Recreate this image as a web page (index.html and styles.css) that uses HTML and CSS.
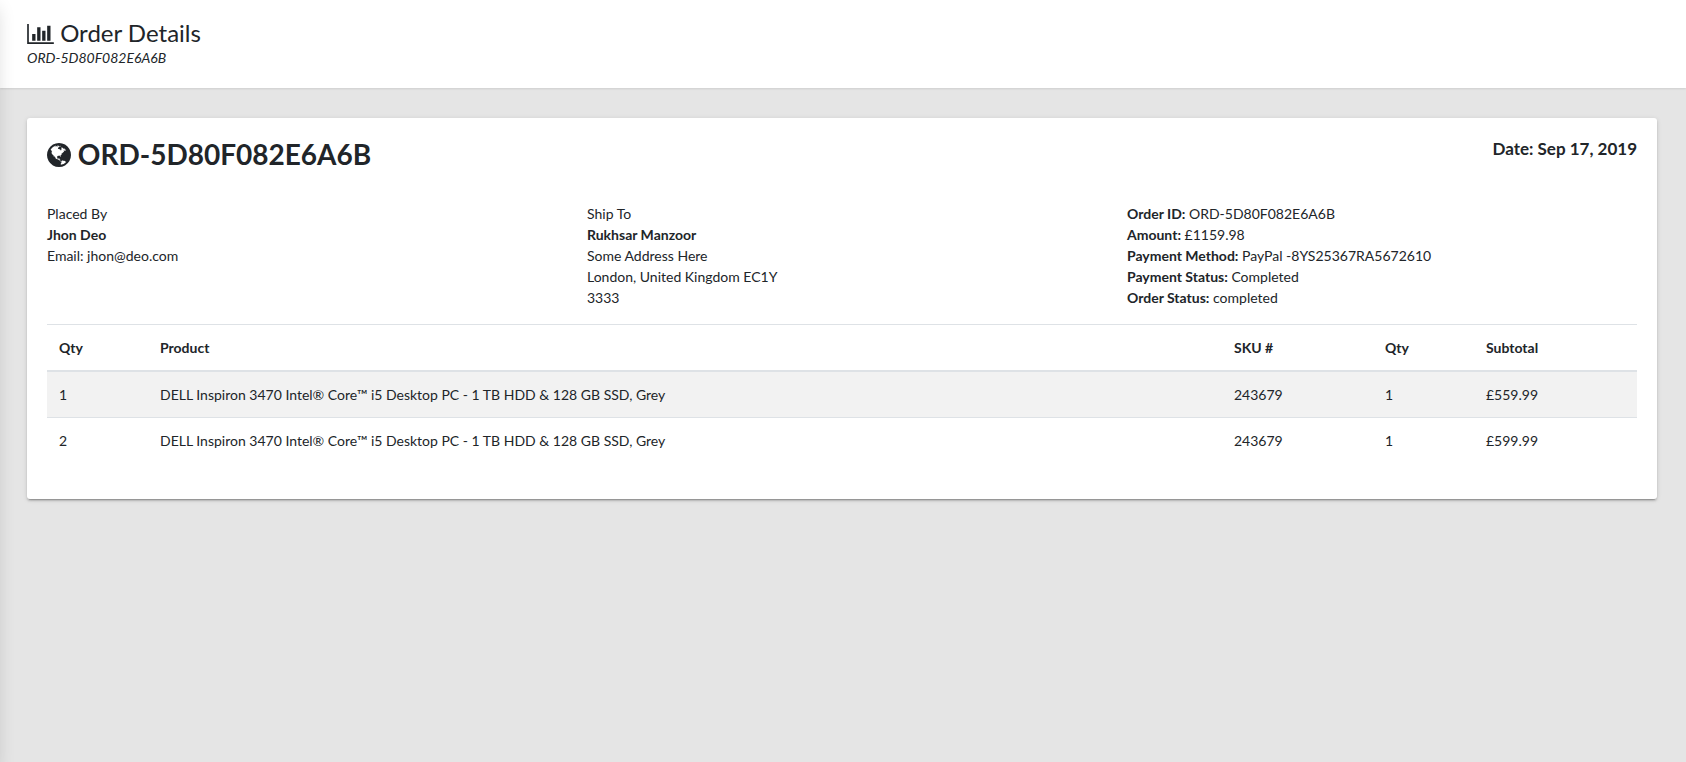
FILE: index.html
```html
<!DOCTYPE html>
<html lang="en">
<head>
    <meta charset="UTF-8">
    <meta name="viewport" content="width=device-width, initial-scale=1.0">
    <title>Order Details</title>
    <link rel="stylesheet" href="styles.css">
</head>
<body>

<main class="app-content">
    <header class="app-title">
        <h1>
            <svg class="icon icon-chart" viewBox="0 0 2048 1536" aria-hidden="true"><path d="M640 768v512h-256v-512h256zm384-512v1024h-256v-1024h256zm1024 1152v128h-2048v-1536h128v1408h1920zm-640-896v768h-256v-768h256zm384-384v1152h-256v-1152h256z"/></svg>
            Order Details
        </h1>
        <p>ORD-5D80F082E6A6B</p>
    </header>

    <section class="tile">
        <div class="page-header">
            <h2>
                <svg class="icon icon-globe" viewBox="0 128 1536 1536" aria-hidden="true"><path d="M768 128q209 0 385.5 103t279.5 279.5 103 385.5-103 385.5-279.5 279.5-385.5 103-385.5-103-279.5-279.5-103-385.5 103-385.5 279.5-279.5 385.5-103zm274 521q-2 1-9.5 9.5t-13.5 9.5q2 0 4.5-5t5-11 3.5-7q6-7 22-15 14-6 52-12 34-8 51 11-2-2 9.5-13t14.5-12q3-2 15-4.5t15-7.5l2-22q-12 1-17.5-7t-6.5-21q0 2-6 8 0-7-4.5-8t-11.5 1-9 1q-10-3-15-7.5t-8-16.5-4-15q-2-5-9.5-11t-9.5-10q-1-2-2.5-5.5t-3-6.5-4-5.5-5.5-2.5-7 5-7.5 10-4.5 5q-3-2-6-1.5t-4.5 1-4.5 3-5 3.5q-3 2-8.5 3t-8.5 2q15-5-1-11-10-4-16-3 9-4 7.5-12t-8.5-14h5q-1-4-8.5-8.5t-17.5-8.5-13-6q-8-5-34-9.5t-33-.5q-5 6-4.5 10.5t4 14 3.5 12.5q1 6-5.5 13t-6.5 12q0 7 14 15.5t10 21.5q-3 8-16 16t-16 12q-5 8-1.5 18.5t10.5 16.5q2 2 1.5 4t-3.5 4.5-5.5 4-6.5 3.5l-3 2q-11 5-20.5-6t-13.5-26q-7-25-16-30-23-8-29 1-5-13-41-26-25-9-58-4 6-1 0-15-7-15-19-12 3-6 4-17.5t1-13.5q3-13 12-23 1-1 7-8.5t9.5-13.5.5-6q35 4 50-11 5-5 11.5-17t10.5-17q9-6 14-5.5t14.5 5.5 14.5 5q14 1 15.5-11t-7.5-20q12 1 3-17-4-7-8-9-12-4-27 5-8 4 2 8-1-1-9.5 10.5t-16.5 17.5-16-5q-1-1-5.5-13.5t-9.5-13.5q-8 0-16 15 3-8-11-15t-24-8q19-12-8-27-7-4-20.5-5t-19.5 4q-5 7-5.5 11.5t5 8 10.5 5.5 11.5 4 8.5 3q14 10 8 14-2 1-8.5 3.5t-11.5 4.5-6 4q-3 4 0 14t-2 14q-5-5-9-17.5t-7-16.5q7 9-25 6l-10-1q-4 0-16 2t-20.5 1-13.5-8q-4-8 0-20 1-4 4-2-4-3-11-9.5t-10-8.5q-46 15-94 41 6 1 12-1 5-2 13-6.5t10-5.5q34-14 42-7l5-5q14 16 20 25-7-4-30-1-20 6-22 12 7 12 5 18-4-3-11.5-10t-14.5-11-15-5q-16 0-22 1-146 80-235 222 7 7 12 8 4 1 5 9t2.5 11 11.5-3q9 8 3 19 1-1 44 27 19 17 21 21 3 11-10 18-1-2-9-9t-9-4q-3 5 .5 18.5t10.5 12.5q-7 0-9.5 16t-2.5 35.5-1 23.5l2 1q-3 12 5.5 34.5t21.5 19.5q-13 3 20 43 6 8 8 9 3 2 12 7.5t15 10 10 10.5q4 5 10 22.5t14 23.5q-2 6 9.5 20t10.5 23q-1 0-2.5 1t-2.5 1q3 7 15.5 14t15.5 13q1 3 2 10t3 11 8 2q2-20-24-62-15-25-17-29-3-5-5.5-15.5t-4.5-14.5q2 0 6 1.5t8.5 3.5 7.5 4 2 3q-3 7 2 17.5t12 18.5 17 19 12 13q6 6 14 19.5t0 13.5q9 0 20 10t17 20q5 8 8 26t5 24q2 7 8.5 13.5t12.5 9.5l16 8 13 7q5 2 18.5 10.5t21.5 11.5q10 4 16 4t14.5-2.5 13.5-3.5q15-2 29 15t21 21q36 19 55 11-2 1 .5 7.5t8 15.5 9 14.5 5.5 8.5q5 6 18 15t18 15q6-4 7-9-3 8 7 20t18 10q14-3 14-32-31 15-49-18 0-1-2.5-5.5t-4-8.5-2.5-8.5 0-7.5 5-3q9 0 10-3.5t-2-12.5-4-13q-1-8-11-20t-12-15q-5 9-16 8t-16-9q0 1-1.5 5.5t-1.5 6.5q-13 0-15-1 1-3 2.5-17.5t3.5-22.5q1-4 5.5-12t7.5-14.5 4-12.5-4.5-9.5-17.5-2.5q-19 1-26 20-1 3-3 10.5t-5 11.5-9 7q-7 3-24 2t-24-5q-13-8-22.5-29t-9.5-37q0-10 2.5-26.5t3-25-5.5-24.5q3-2 9-9.5t10-10.5q2-1 4.5-1.5t4.5 0 4-1.5 3-6q-1-1-4-3-3-3-4-3 7 3 28.5-1.5t27.5 1.5q15 11 22-2 0-1-2.5-9.5t-.5-13.5q5 27 29 9 3 3 15.5 5t17.5 5q3 2 7 5.5t5.5 4.5 5-.5 8.5-6.5q10 14 12 24 11 40 19 44 7 3 11 2t4.5-9.5 0-14-1.5-12.5l-1-8v-18l-1-8q-15-3-18.5-12t1.5-18.5 15-18.5q1-1 8-3.5t15.5-6.5 12.5-8q21-19 15-35 7 0 11-9-1 0-5-3t-7.5-5-4.5-2q9-5 2-16 5-3 7.5-11t7.5-10q9 12 21 2 8-8 1-16 5-7 20.5-10.5t18.5-9.5q7 2 8-2t1-12 3-12q4-5 15-9t13-5l17-11q3-4 0-4 18 2 31-11 10-11-6-20 3-6-3-9.5t-15-5.5q3-1 11.5-.5t10.5-1.5q15-10-7-16-17-5-43 12zm-163 877q206-36 351-189-3-3-12.5-4.5t-12.5-3.5q-18-7-24-8 1-7-2.5-13t-8-9-12.5-8-11-7q-2-2-7-6t-7-5.5-7.5-4.5-8.5-2-10 1l-3 1q-3 1-5.5 2.5t-5.5 3-4 3 0 2.5q-21-17-36-22-5-1-11-5.5t-10.5-7-10-1.5-11.5 7q-5 5-6 15t-2 13q-7-5 0-17.5t2-18.5q-3-6-10.5-4.5t-12 4.5-11.5 8.5-9 6.5-8.5 5.5-8.5 7.5q-3 4-6 12t-5 11q-2-4-11.5-6.5t-9.5-5.5q2 10 4 35t5 38q7 31-12 48-27 25-29 40-4 22 12 26 0 7-8 20.5t-7 21.5q0 6 2 16z"/></svg>
                ORD-5D80F082E6A6B
            </h2>
            <h5>Date: Sep 17, 2019</h5>
        </div>

        <div class="invoice-info">
            <div>
                Placed By
                <address><strong>Jhon Deo</strong><br>Email: jhon@deo.com</address>
            </div>
            <div>
                Ship To
                <address><strong>Rukhsar Manzoor</strong><br>Some Address Here<br>London, United Kingdom EC1Y<br>3333</address>
            </div>
            <div>
                <b>Order ID:</b> ORD-5D80F082E6A6B<br>
                <b>Amount:</b> £1159.98<br>
                <b>Payment Method:</b> PayPal -8YS25367RA5672610<br>
                <b>Payment Status:</b> Completed<br>
                <b>Order Status:</b> completed
            </div>
        </div>

        <table class="table">
            <thead>
                <tr>
                    <th class="col-qty">Qty</th>
                    <th>Product</th>
                    <th class="col-sku">SKU #</th>
                    <th class="col-qty">Qty</th>
                    <th class="col-subtotal">Subtotal</th>
                </tr>
            </thead>
            <tbody>
                <tr>
                    <td>1</td>
                    <td>DELL Inspiron 3470 Intel® Core™ i5 Desktop PC - 1 TB HDD &amp; 128 GB SSD, Grey</td>
                    <td>243679</td>
                    <td>1</td>
                    <td>£559.99</td>
                </tr>
                <tr>
                    <td>2</td>
                    <td>DELL Inspiron 3470 Intel® Core™ i5 Desktop PC - 1 TB HDD &amp; 128 GB SSD, Grey</td>
                    <td>243679</td>
                    <td>1</td>
                    <td>£599.99</td>
                </tr>
            </tbody>
        </table>
    </section>
</main>

</body>
</html>
```
FILE: styles.css
```css
* {
    box-sizing: border-box;
}
body {
    margin: 0;
    font-family: Lato, "Liberation Sans", sans-serif;
    font-size: 14px;
    line-height: 21px;
    color: #212529;
    background-color: #e5e5e5;
}
h1, h2, h5, p {
    margin: 0;
}
/* shadow along the left edge of the page */
body::before {
    content: "";
    position: fixed;
    top: 0;
    bottom: 0;
    left: -230px;
    width: 227px;
    box-shadow: 0 8px 17px rgba(0, 0, 0, 0.16);
    z-index: 10;
}
.icon {
    fill: currentColor;
}
.app-title {
    padding: 19px 29px 20px 27px;
    background-color: #fff;
    box-shadow: 0 1px 2px rgba(0, 0, 0, 0.1);
}
.app-title h1 {
    font-size: 24px;
    font-weight: 400;
    line-height: 28px;
}
.app-title p {
    font-style: italic;
}
.icon-chart {
    width: 27px;
    height: 20px;
    vertical-align: -2px;
}
.tile {
    margin: 30px 29px 30px 27px;
    padding: 20px;
    background-color: #fff;
    border-radius: 3px;
    box-shadow: 0 2px 2px 0 rgba(0, 0, 0, 0.14), 0 3px 1px -2px rgba(0, 0, 0, 0.2), 0 1px 5px 0 rgba(0, 0, 0, 0.12);
}
.page-header {
    display: flex;
    justify-content: space-between;
    margin-bottom: 33px;
}
.page-header h2 {
    font-size: 28px;
    font-weight: 700;
    line-height: 32px;
}
.page-header h5 {
    font-size: 17px;
    font-weight: 700;
    line-height: 21px;
}
.icon-globe {
    width: 24px;
    height: 24px;
    vertical-align: -2px;
}
.invoice-info {
    display: grid;
    grid-template-columns: repeat(3, 1fr);
    gap: 30px;
    margin-bottom: 16px;
}
address {
    font-style: normal;
}
.table {
    width: 100%;
    margin-bottom: 16px;
    border-collapse: collapse;
    table-layout: fixed;
}
.table th, .table td {
    padding: 12px;
    text-align: left;
    vertical-align: top;
    border-top: 1px solid #dee2e6;
}
.table thead th {
    border-bottom: 2px solid #dee2e6;
}
.table tbody tr:nth-child(odd) {
    background-color: #f2f2f2;
}
.col-qty {
    width: 101px;
}
.col-sku {
    width: 151px;
}
.col-subtotal {
    width: 163px;
}
```
